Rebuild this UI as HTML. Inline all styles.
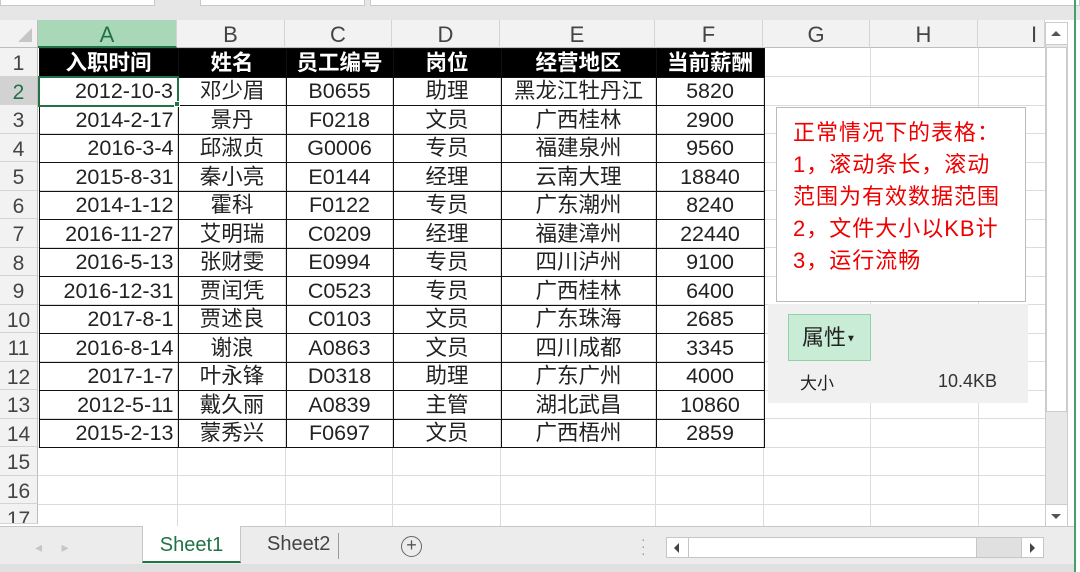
<!DOCTYPE html>
<html><head><meta charset="utf-8"><style>
*{margin:0;padding:0;box-sizing:border-box}
body{width:1080px;height:572px;overflow:hidden;background:#fff;font-family:"Liberation Sans","Noto Sans CJK SC",sans-serif;position:relative;color:#222}
.a{position:absolute}
.top{left:0;top:0;width:1080px;height:20px;background:#e6e6e6}
.top div{position:absolute;top:0;height:6px;background:#fff;border:1px solid #c8c8c8;border-top:none}
.ch{top:20px;height:28px;background:#f2f2f2;border-right:1px solid #d4d4d4;border-bottom:1px solid #bdbdbd;text-align:center;font-size:22px;line-height:30px;color:#444}
.rh{left:0;width:38px;background:#f2f2f2;border-bottom:1px solid #d4d4d4;border-right:1px solid #bdbdbd;text-align:center;font-size:21px;color:#444}
.vl{top:48px;width:1px;height:478px;background:#dcdcdc}
.hl{left:38px;width:1007px;height:1px;background:#dcdcdc}
table{position:absolute;left:38px;top:48px;border-collapse:collapse;table-layout:fixed}
tr{height:28.5px}
td{border:1.5px solid #111;font-size:21.5px;text-align:center;padding:0;line-height:20px;white-space:nowrap;overflow:visible}
tr.h td{background:#000;color:#fff;font-weight:bold}
td.d{text-align:right;padding-right:4px}
</style></head><body>
<div class="a top"><div style="left:0;width:155px"></div><div style="left:200px;width:165px"></div><div style="left:370px;width:710px"></div></div>
<div class="a" style="left:0;top:20px;width:38px;height:28px;background:#f2f2f2;border-right:1px solid #bdbdbd;border-bottom:1px solid #bdbdbd"><div class="a" style="left:18px;top:8px;width:0;height:0;border-left:14px solid transparent;border-bottom:14px solid #c6c6c6"></div></div>
<div class="a ch" style="left:38px;width:139px;background:#a9d8b8;color:#217346;border-bottom:2px solid #217346">A</div>
<div class="a ch" style="left:177px;width:108px">B</div>
<div class="a ch" style="left:285px;width:107px">C</div>
<div class="a ch" style="left:392px;width:108px">D</div>
<div class="a ch" style="left:500px;width:155px">E</div>
<div class="a ch" style="left:655px;width:108px">F</div>
<div class="a ch" style="left:763px;width:107px">G</div>
<div class="a ch" style="left:870px;width:108px">H</div>
<div class="a ch" style="left:978px;width:67px;text-align:left;padding-left:53px">I</div>
<div class="a vl" style="left:177px"></div><div class="a vl" style="left:285px"></div><div class="a vl" style="left:392px"></div><div class="a vl" style="left:500px"></div><div class="a vl" style="left:655px"></div><div class="a vl" style="left:763px"></div><div class="a vl" style="left:870px"></div><div class="a vl" style="left:978px"></div>
<div class="a hl" style="top:76px"></div><div class="a hl" style="top:105px"></div><div class="a hl" style="top:133px"></div><div class="a hl" style="top:162px"></div><div class="a hl" style="top:190px"></div><div class="a hl" style="top:219px"></div><div class="a hl" style="top:247px"></div><div class="a hl" style="top:276px"></div><div class="a hl" style="top:304px"></div><div class="a hl" style="top:333px"></div><div class="a hl" style="top:361px"></div><div class="a hl" style="top:390px"></div><div class="a hl" style="top:418px"></div><div class="a hl" style="top:447px"></div><div class="a hl" style="top:475px"></div><div class="a hl" style="top:504px"></div>
<div class="a" style="left:0;top:48px;width:38px;height:478px">
<div class="rh" style="height:28.5px;line-height:31px">1</div><div class="rh" style="height:28.5px;line-height:31px;color:#217346;background:#d2d2d2">2</div><div class="rh" style="height:28.5px;line-height:31px">3</div><div class="rh" style="height:28.5px;line-height:31px">4</div><div class="rh" style="height:28.5px;line-height:31px">5</div><div class="rh" style="height:28.5px;line-height:31px">6</div><div class="rh" style="height:28.5px;line-height:31px">7</div><div class="rh" style="height:28.5px;line-height:31px">8</div><div class="rh" style="height:28.5px;line-height:31px">9</div><div class="rh" style="height:28.5px;line-height:31px">10</div><div class="rh" style="height:28.5px;line-height:31px">11</div><div class="rh" style="height:28.5px;line-height:31px">12</div><div class="rh" style="height:28.5px;line-height:31px">13</div><div class="rh" style="height:28.5px;line-height:31px">14</div><div class="rh" style="height:28.5px;line-height:31px">15</div><div class="rh" style="height:28.5px;line-height:31px">16</div><div class="rh" style="height:20px;line-height:31px;overflow:hidden">17</div>
</div>
<table style="width:725px">
<colgroup><col style="width:139px"><col style="width:108px"><col style="width:107px"><col style="width:108px"><col style="width:155px"><col style="width:108px"></colgroup>
<tr class="h"><td>入职时间</td><td>姓名</td><td>员工编号</td><td>岗位</td><td>经营地区</td><td>当前薪酬</td></tr>
<tr><td class="d" style="border:2px solid #217346">2012-10-3</td><td>邓少眉</td><td>B0655</td><td>助理</td><td>黑龙江牡丹江</td><td>5820</td></tr>
<tr><td class="d">2014-2-17</td><td>景丹</td><td>F0218</td><td>文员</td><td>广西桂林</td><td>2900</td></tr>
<tr><td class="d">2016-3-4</td><td>邱淑贞</td><td>G0006</td><td>专员</td><td>福建泉州</td><td>9560</td></tr>
<tr><td class="d">2015-8-31</td><td>秦小亮</td><td>E0144</td><td>经理</td><td>云南大理</td><td>18840</td></tr>
<tr><td class="d">2014-1-12</td><td>霍科</td><td>F0122</td><td>专员</td><td>广东潮州</td><td>8240</td></tr>
<tr><td class="d">2016-11-27</td><td>艾明瑞</td><td>C0209</td><td>经理</td><td>福建漳州</td><td>22440</td></tr>
<tr><td class="d">2016-5-13</td><td>张财雯</td><td>E0994</td><td>专员</td><td>四川泸州</td><td>9100</td></tr>
<tr><td class="d">2016-12-31</td><td>贾闰凭</td><td>C0523</td><td>专员</td><td>广西桂林</td><td>6400</td></tr>
<tr><td class="d">2017-8-1</td><td>贾述良</td><td>C0103</td><td>文员</td><td>广东珠海</td><td>2685</td></tr>
<tr><td class="d">2016-8-14</td><td>谢浪</td><td>A0863</td><td>文员</td><td>四川成都</td><td>3345</td></tr>
<tr><td class="d">2017-1-7</td><td>叶永锋</td><td>D0318</td><td>助理</td><td>广东广州</td><td>4000</td></tr>
<tr><td class="d">2012-5-11</td><td>戴久丽</td><td>A0839</td><td>主管</td><td>湖北武昌</td><td>10860</td></tr>
<tr><td class="d">2015-2-13</td><td>蒙秀兴</td><td>F0697</td><td>文员</td><td>广西梧州</td><td>2859</td></tr>
</table>
<div class="a" style="left:174px;top:101px;width:6px;height:6px;background:#217346;border:1px solid #fff"></div>
<div class="a" style="left:776px;top:107px;width:250px;height:195px;background:#fff;border:1px solid #bbb;color:#e00;font-size:22px;letter-spacing:1px;line-height:32px;padding:9px 0 0 16px;white-space:nowrap">正常情况下的表格：<br>1，滚动条长，滚动<br>范围为有效数据范围<br>2，文件大小以KB计<br>3，运行流畅</div>
<div class="a" style="left:768px;top:304px;width:260px;height:99px;background:#f0f0f0">
<div class="a" style="left:20px;top:10px;width:83px;height:47px;background:#c9ecd6;border:1px solid #8fd1a8;font-size:22px;line-height:45px;padding-left:13px;color:#222">属性<span style="font-size:10px;vertical-align:middle">▼</span></div>
<div class="a" style="left:32px;top:65px;font-size:17px">大小</div>
<div class="a" style="right:31px;top:67px;font-size:18px;color:#333">10.4KB</div>
</div>
<div class="a" style="left:1045px;top:22px;width:23px;height:504px;background:#e8e8e8;border:1px solid #ccc">
<div class="a" style="left:0;top:0;width:21px;height:22px;background:#fff;border-bottom:1px solid #ccc"><div class="a" style="left:5px;top:8px;border-left:5px solid transparent;border-right:5px solid transparent;border-bottom:5px solid #555"></div></div>
<div class="a" style="left:0;top:24px;width:21px;height:365px;background:#fff;border:1px solid #ccc"></div>
<div class="a" style="left:0;top:481px;width:21px;height:22px;background:#fff;border-top:1px solid #ccc"><div class="a" style="left:5px;top:9px;border-left:5px solid transparent;border-right:5px solid transparent;border-top:5px solid #555"></div></div>
</div>
<div class="a" style="left:1074px;top:0;width:2px;height:572px;background:#4a9e6a"></div>
<div class="a" style="left:0;top:526px;width:1074px;height:38px;background:#ececec;border-top:1px solid #c6c6c6"></div>
<div class="a" style="left:0;top:564px;width:1074px;height:8px;background:#e0e0e0"></div>
<div class="a" style="left:35px;top:539px;color:#c6c6c6;font-size:14px">◂&nbsp;&nbsp;&nbsp;&nbsp;&nbsp;▸</div>
<div class="a" style="left:142px;top:526px;width:99px;height:37px;background:#fff;border:1px solid #c6c6c6;border-top:none;border-bottom:2px solid #217346;color:#217346;font-size:20px;text-align:center;line-height:38px">Sheet1</div>
<div class="a" style="left:267px;top:533px;font-size:20px;color:#444">Sheet2</div>
<div class="a" style="left:338px;top:533px;width:1px;height:26px;background:#999"></div>
<div class="a" style="left:401px;top:536px;width:21px;height:21px;border:1.5px solid #666;border-radius:50%;text-align:center;line-height:17px;font-size:18px;color:#555">+</div>
<div class="a" style="left:641px;top:536px;color:#999;font-size:14px;line-height:7px">·<br>·<br>·</div>
<div class="a" style="left:666px;top:537px;width:378px;height:21px;background:#e0e0e0;border:1px solid #c6c6c6">
<div class="a" style="left:0;top:0;width:22px;height:19px;background:#fff;border-right:1px solid #c6c6c6"><div class="a" style="left:7px;top:5px;border-top:5px solid transparent;border-bottom:5px solid transparent;border-right:5px solid #444"></div></div>
<div class="a" style="left:22px;top:0;width:288px;height:19px;background:#fff;border-right:1px solid #c6c6c6"></div>
<div class="a" style="right:0;top:0;width:22px;height:19px;background:#fff;border-left:1px solid #c6c6c6"><div class="a" style="left:8px;top:5px;border-top:5px solid transparent;border-bottom:5px solid transparent;border-left:5px solid #444"></div></div>
</div>
</body></html>
